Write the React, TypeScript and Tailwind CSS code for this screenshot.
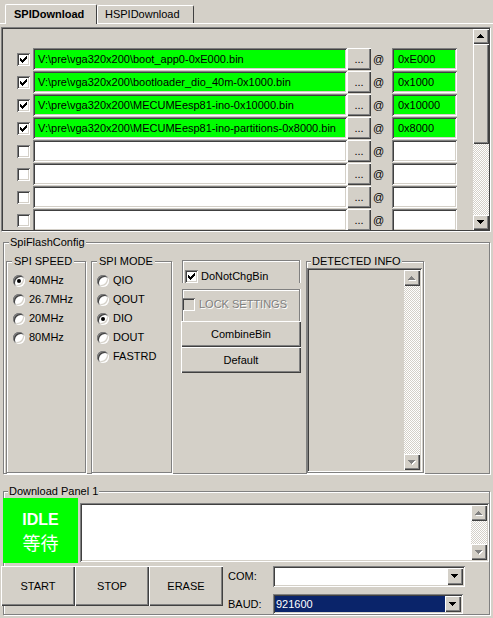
import React from 'react';

const raised = 'bg-[#d4d0c8] shadow-[inset_1px_1px_#ffffff,inset_-1px_-1px_#404040,inset_-2px_-2px_#808080]';
const sunken = 'shadow-[inset_1px_1px_#808080,inset_-1px_-1px_#ffffff,inset_2px_2px_#404040,inset_-2px_-2px_#d4d0c8]';
const etched = 'border border-[#808080] shadow-[inset_1px_1px_#ffffff,1px_1px_#ffffff]';
const track = 'bg-[repeating-conic-gradient(#ffffff_0_25%,#d4d0c8_0_50%)] bg-[length:2px_2px]';

const UP = 'M3 0h1v1h1v1h1v1h1v1H0V3h1V2h1V1h1z';
const DOWN = 'M0 0h7v1H6v1H5v1H4v1H3V3H2V2H1V1H0z';

function Arrow({ dir, off }: { dir: 'up' | 'down'; off?: boolean }) {
  const d = dir === 'up' ? UP : DOWN;
  return (
    <svg width="8" height="5" viewBox="0 0 8 5" shapeRendering="crispEdges">
      {off && <path d={d} fill="#ffffff" transform="translate(1 1)" />}
      <path d={d} fill={off ? '#808080' : '#000000'} />
    </svg>
  );
}

function Check({ checked, disabled }: { checked?: boolean; disabled?: boolean }) {
  return (
    <span className={`relative block w-[13px] h-[13px] shrink-0 ${disabled ? 'bg-[#d4d0c8]' : 'bg-white'} ${sunken}`}>
      {checked && (
        <svg className="absolute left-[3px] top-[3px]" width="7" height="7" viewBox="0 0 7 7" shapeRendering="crispEdges">
          <path d="M6 0h1v3H6v1H5v1H4v1H3v1H2V6H1V5H0V2h1v1h1v1h1V3h1V2h1V1h1z" fill="#000" />
        </svg>
      )}
    </span>
  );
}

function Radio({ on }: { on?: boolean }) {
  return (
    <span className={`relative block w-[12px] h-[12px] shrink-0 rounded-full bg-white ${sunken}`}>
      {on && <span className="absolute left-[4px] top-[4px] w-[4px] h-[4px] rounded-full bg-black" />}
    </span>
  );
}

function ScrollBtn({ dir, off, h = 'h-[16px]' }: { dir: 'up' | 'down'; off?: boolean; h?: string }) {
  return (
    <div className={`${raised} ${h} shrink-0 flex items-center justify-center`}>
      <Arrow dir={dir} off={off} />
    </div>
  );
}

const files: [string, string][] = [
  ['V:\\pre\\vga320x200\\boot_app0-0xE000.bin', '0xE000'],
  ['V:\\pre\\vga320x200\\bootloader_dio_40m-0x1000.bin', '0x1000'],
  ['V:\\pre\\vga320x200\\MECUMEesp81-ino-0x10000.bin', '0x10000'],
  ['V:\\pre\\vga320x200\\MECUMEesp81-ino-partitions-0x8000.bin', '0x8000'],
  ['', ''],
  ['', ''],
  ['', ''],
  ['', ''],
];

const speeds = ['40MHz', '26.7MHz', '20MHz', '80MHz'];
const modes = ['QIO', 'QOUT', 'DIO', 'DOUT', 'FASTRD'];

export default function App() {
  return (
    <div className="w-[493px] h-[618px] overflow-hidden bg-[#d4d0c8] text-[11px] leading-[13px] text-black font-['Liberation_Sans',Arial,sans-serif]">
      {/* tabs */}
      <div className="h-[24px] flex items-end pl-[5px] border-b border-white">
        <div className="relative -mb-px w-[92px] h-[20px] pl-[8px] flex items-center font-bold bg-[#d4d0c8] border-t border-l border-white border-r border-r-[#404040] rounded-t-[2px]">
          SPIDownload
        </div>
        <div className="w-[97px] h-[18px] pl-[7px] flex items-center border-t border-l border-white border-r border-r-[#404040] rounded-t-[2px]">
          HSPIDownload
        </div>
      </div>

      {/* file list */}
      <div className="mt-[3px] ml-[1px] w-[490px] h-[205px] border border-t-[#808080] border-l-[#808080] border-b-white border-r-white">
        <div className="h-full border border-[#404040] flex">
          <div className="flex-1 pt-[19px] flex flex-col gap-[1px] overflow-hidden">
            {files.map(([f, a], i) => (
              <div key={i} className="flex items-center h-[22px] shrink-0">
                <span className="ml-[14px]">
                  <Check checked={!!f} />
                </span>
                <div className={`ml-[3px] w-[314px] h-[22px] pl-[5px] flex items-center whitespace-nowrap overflow-hidden ${sunken} ${f ? 'bg-[#00ff00]' : 'bg-white'}`}>
                  {f}
                </div>
                <div className={`w-[24px] h-[22px] ${raised} flex items-center justify-center`}>...</div>
                <span className="w-[21px] pl-[2px]">@</span>
                <div className={`w-[65px] h-[22px] pl-[6px] flex items-center ${sunken} ${a ? 'bg-[#00ff00]' : 'bg-white'}`}>
                  {a}
                </div>
              </div>
            ))}
          </div>
          <div className="w-[16px] flex flex-col">
            <ScrollBtn dir="up" h="h-[15px]" />
            <div className={`${raised} h-[100px] shrink-0`} />
            <div className={`flex-1 ${track}`} />
            <ScrollBtn dir="down" h="h-[15px]" />
          </div>
        </div>
      </div>

      {/* SpiFlashConfig */}
      <fieldset className={`mt-[4px] ml-[3px] w-[487px] h-[238px] px-[2px] ${etched}`}>
        <legend className="ml-[3px] px-[1px] bg-[#d4d0c8]">SpiFlashConfig</legend>
        <div className="h-full flex items-stretch">
          <fieldset className={`mt-[6px] w-[80px] ${etched}`}>
            <legend className="ml-[5px] px-[2px] bg-[#d4d0c8]">SPI SPEED</legend>
            <div className="pt-[3px] pl-[6px] flex flex-col">
              {speeds.map((s, i) => (
                <label key={s} className="h-[19px] flex items-center gap-[4px]">
                  <Radio on={i === 0} />
                  {s}
                </label>
              ))}
            </div>
          </fieldset>
          <fieldset className={`mt-[6px] ml-[5px] w-[81px] ${etched}`}>
            <legend className="ml-[5px] px-[2px] bg-[#d4d0c8]">SPI MODE</legend>
            <div className="pt-[3px] pl-[5px] flex flex-col">
              {modes.map((s, i) => (
                <label key={s} className="h-[19px] flex items-center gap-[4px]">
                  <Radio on={i === 2} />
                  {s}
                </label>
              ))}
            </div>
          </fieldset>

          <div className="ml-[9px] w-[120px] flex flex-col pt-[11px]">
            <div className="ml-[1px] w-[118px] h-[23px] border-t border-l border-r border-[#808080] shadow-[inset_1px_1px_#ffffff,1px_0_#ffffff] pl-[2px] pt-[9px] flex items-start gap-[3px]">
              <Check checked />
              <span className="leading-[13px]">DoNotChgBin</span>
            </div>
            <div className="mt-[6px] ml-[1px] w-[118px] h-[32px] border-t border-l border-r border-[#808080] shadow-[inset_1px_1px_#ffffff,1px_0_#ffffff] pt-[8px] flex items-start gap-[4px]">
              <span className="-ml-[1px]">
                <Check disabled />
              </span>
              <span className="text-[#808080] [text-shadow:1px_1px_0_#ffffff]">LOCK SETTINGS</span>
            </div>
            <div className={`${raised} h-[26px] flex items-center justify-center`}>CombineBin</div>
            <div className={`${raised} h-[26px] flex items-center justify-center`}>Default</div>
          </div>

          <fieldset className={`mt-[6px] ml-[5px] w-[118px] pr-[1px] ${etched}`}>
            <legend className="ml-[4px] px-[1px] bg-[#d4d0c8]">DETECTED INFO</legend>
            <div className={`w-full h-full flex bg-[#d4d0c8] ${sunken} p-[2px]`}>
              <div className="flex-1" />
              <div className="w-[16px] flex flex-col">
                <ScrollBtn dir="up" off />
                <div className={`flex-1 ${track}`} />
                <ScrollBtn dir="down" off />
              </div>
            </div>
          </fieldset>
        </div>
      </fieldset>

      {/* Download panel */}
      <fieldset className={`mt-[11px] ml-[3px] w-[487px] h-[130px] ${etched}`}>
        <legend className="ml-[4px] px-[1px] bg-[#d4d0c8]">Download Panel 1</legend>
        <div className="-ml-[1px] flex items-start">
          <div className="w-[75px] h-[65px] bg-[#00ff00] text-white flex flex-col items-center justify-center">
            <span className="text-[16px] leading-[22px] font-bold">IDLE</span>
            <span className="text-[18px] leading-[22px] font-['Noto_Sans_CJK_SC',sans-serif]">等待</span>
          </div>
          <div className={`mt-[5px] ml-[2px] w-[409px] h-[59px] bg-white ${sunken} p-[2px] flex`}>
            <div className="flex-1" />
            <div className="w-[16px] flex flex-col">
              <ScrollBtn dir="up" off />
              <div className={`flex-1 ${track}`} />
              <ScrollBtn dir="down" off />
            </div>
          </div>
        </div>
        <div className="-ml-[3px] mt-[3px] flex items-start">
          <div className={`${raised} w-[74px] h-[40px] flex items-center justify-center`}>START</div>
          <div className={`${raised} w-[74px] h-[40px] flex items-center justify-center`}>STOP</div>
          <div className={`${raised} w-[74px] h-[40px] flex items-center justify-center`}>ERASE</div>
          <div className="ml-[5px] flex flex-col">
            <div className="flex items-center h-[21px]">
              <span className="w-[45px]">COM:</span>
              <div className={`w-[192px] h-[21px] bg-white ${sunken} p-[2px] flex`}>
                <div className="flex-1" />
                <ScrollBtn dir="down" h="h-[17px] w-[16px]" />
              </div>
            </div>
            <div className="mt-[7px] flex items-center h-[20px]">
              <span className="w-[45px]">BAUD:</span>
              <div className={`w-[190px] h-[20px] bg-white ${sunken} p-[2px] flex`}>
                <div className="flex-1 bg-[#0a246a] text-white pl-[1px] flex items-center">921600</div>
                <ScrollBtn dir="down" h="h-[16px] w-[16px]" />
              </div>
            </div>
          </div>
        </div>
      </fieldset>
    </div>
  );
}
